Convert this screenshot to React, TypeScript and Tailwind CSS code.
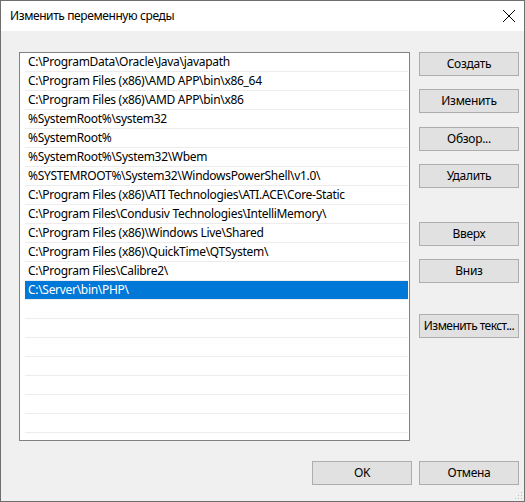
import React from "react";

const items = [
  "C:\\ProgramData\\Oracle\\Java\\javapath",
  "C:\\Program Files (x86)\\AMD APP\\bin\\x86_64",
  "C:\\Program Files (x86)\\AMD APP\\bin\\x86",
  "%SystemRoot%\\system32",
  "%SystemRoot%",
  "%SystemRoot%\\System32\\Wbem",
  "%SYSTEMROOT%\\System32\\WindowsPowerShell\\v1.0\\",
  "C:\\Program Files (x86)\\ATI Technologies\\ATI.ACE\\Core-Static",
  "C:\\Program Files\\Condusiv Technologies\\IntelliMemory\\",
  "C:\\Program Files (x86)\\Windows Live\\Shared",
  "C:\\Program Files (x86)\\QuickTime\\QTSystem\\",
  "C:\\Program Files\\Calibre2\\",
  "C:\\Server\\bin\\PHP\\",
];

function Btn({ children, className = "" }: { children: React.ReactNode; className?: string }) {
  return (
    <div
      className={
        "flex h-[24px] w-[100px] items-center justify-center whitespace-nowrap border border-[#adadad] bg-[#e1e1e1] text-[12px] text-black " +
        className
      }
    >
      {children}
    </div>
  );
}

export default function App() {
  const rows = Array.from({ length: 21 }, (_, i) => items[i] ?? "");
  return (
    <div
      className="relative flex h-[502px] w-[525px] flex-col border border-[#6e6e6e] bg-[#f0f0f0] text-black"
      style={{ fontFamily: '"Noto Sans", "Segoe UI", sans-serif' }}
    >
      <div className="flex h-[30px] shrink-0 items-center justify-between bg-white pl-[9px] pr-[7px]">
        <span className="text-[12px] tracking-[-0.4px]">Изменить переменную среды</span>
        <svg width="14" height="14" viewBox="0 0 14 14" className="mr-[1px]">
          <path d="M1 1 L13 13 M13 1 L1 13" stroke="#000" strokeWidth="1" fill="none" />
        </svg>
      </div>
      <div className="flex flex-1 flex-col">
        <div className="flex pl-[18px] pt-[21px]">
          <div className="h-[389px] w-[391px] overflow-hidden border border-[#828282] bg-white pl-[5px] pr-[1px]">
            {rows.map((t, i) => (
              <div
                key={i}
                className={
                  "flex h-[19px] items-center border-b border-[#ececec] pl-[3px] text-[12px] tracking-[-0.3px] whitespace-nowrap " +
                  (i === 12 ? "bg-[#0078d7] text-white" : "")
                }
              >
                {t}
              </div>
            ))}
          </div>
          <div className="ml-[9px] flex flex-col">
            <Btn className="tracking-[-0.3px]">Создать</Btn>
            <Btn className="mt-[13px] tracking-[-0.3px]">Изменить</Btn>
            <Btn className="mt-[14px] tracking-[-0.3px]">Обзор...</Btn>
            <Btn className="mt-[13px] tracking-[-0.3px]">Удалить</Btn>
            <Btn className="mt-[34px] tracking-[-0.3px]">Вверх</Btn>
            <Btn className="mt-[13px] tracking-[-0.3px]">Вниз</Btn>
            <Btn className="mt-[31px] tracking-[-0.55px]">Изменить текст...</Btn>
          </div>
        </div>
        <div className="mt-[20px] flex justify-end gap-[7px] pr-[5px]">
          <Btn className="tracking-[-0.3px]">OK</Btn>
          <Btn className="tracking-[-0.3px]">Отмена</Btn>
        </div>
      </div>
      <svg width="8" height="8" viewBox="0 0 8 8" className="absolute bottom-[1px] right-[1px]">
        <rect x="6" y="0" width="1" height="1" fill="#bcbcbc" />
        <rect x="3" y="3" width="1" height="1" fill="#bcbcbc" />
        <rect x="6" y="3" width="1" height="1" fill="#bcbcbc" />
        <rect x="0" y="6" width="1" height="1" fill="#bcbcbc" />
        <rect x="3" y="6" width="1" height="1" fill="#bcbcbc" />
        <rect x="6" y="6" width="1" height="1" fill="#bcbcbc" />
      </svg>
    </div>
  );
}
